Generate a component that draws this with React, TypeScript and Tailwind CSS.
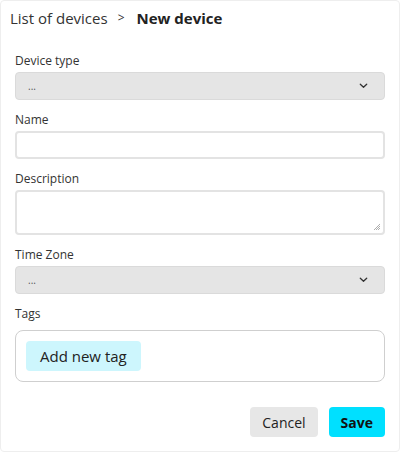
import React from 'react'

// ─── Small pieces ─────────────────────────────────────────────────────
function Label({ children }: { children: React.ReactNode }) {
  return <div className="h-4 text-[12px] leading-4 text-[#333]">{children}</div>
}

function Chevron() {
  return (
    <svg width="9" height="6" viewBox="0 0 9 6" fill="none">
      <path d="M1.3 1.3 L4.5 4.3 L7.7 1.3" stroke="#333" strokeWidth="1.3" strokeLinecap="round" strokeLinejoin="round" />
    </svg>
  )
}

function SelectBox() {
  return (
    <div className="mt-[3px] flex h-[28px] items-center justify-between rounded-[4px] border border-[#dadada] bg-[#e5e5e5] pl-3 pr-[16px]">
      <span className="text-[10px] leading-none text-[#555]">...</span>
      <Chevron />
    </div>
  )
}

function ResizeGrip() {
  return (
    <svg width="9" height="9" viewBox="0 0 9 9" className="absolute bottom-[2px] right-[2px]">
      <path d="M8 2 L2 8 M8 4 L4 8 M8 6 L6 8" stroke="#999" strokeWidth="0.8" />
    </svg>
  )
}

export default function App() {
  return (
    <div
      className="flex h-[452px] w-[400px] flex-col rounded-[4px] border border-[#eeeeee] bg-white"
      style={{ fontFamily: '"Open Sans", "Liberation Sans", sans-serif' }}
    >
      {/* ─── Breadcrumb ─────────────────────────────────────────── */}
      <div className="flex items-center pl-[9px] pt-[6px] text-[15px] leading-[22px] text-[#333]">
        <span>List of devices</span>
        <span className="ml-[10px] mr-[12px] text-[12px]">&gt;</span>
        <span className="font-bold text-[#222]">New device</span>
      </div>

      {/* ─── Form ───────────────────────────────────────────────── */}
      <div className="mt-[24px] flex flex-col px-[14px]">
        <Label>Device type</Label>
        <SelectBox />

        <div className="mt-[12px]">
          <Label>Name</Label>
          <div className="mt-[3px] h-[28px] rounded-[4px] border-2 border-[#e3e3e3] bg-white" />
        </div>

        <div className="mt-[12px]">
          <Label>Description</Label>
          <div className="relative mt-[3px] h-[45px] rounded-[4px] border-2 border-[#e3e3e3] bg-white">
            <ResizeGrip />
          </div>
        </div>

        <div className="mt-[12px]">
          <Label>Time Zone</Label>
          <SelectBox />
        </div>

        <div className="mt-[12px]">
          <Label>Tags</Label>
          <div className="mt-[8px] flex h-[52px] items-center rounded-[8px] border border-[#cfcfcf] px-[10px]">
            <span className="flex h-[30px] items-center rounded-[4px] bg-[#cdf6fd] px-[14px] text-[15px] text-[#222]">
              Add new tag
            </span>
          </div>
        </div>
      </div>

      {/* ─── Actions ────────────────────────────────────────────── */}
      <div className="mt-[25px] flex justify-end gap-[11px] px-[14px]">
        <button className="h-[30px] rounded-[4px] bg-[#e7e7e7] px-[12px] text-[14px] text-[#222]">Cancel</button>
        <button className="h-[30px] rounded-[4px] bg-[#00e0ff] px-[12px] text-[14px] font-bold text-[#111]">Save</button>
      </div>
    </div>
  )
}
